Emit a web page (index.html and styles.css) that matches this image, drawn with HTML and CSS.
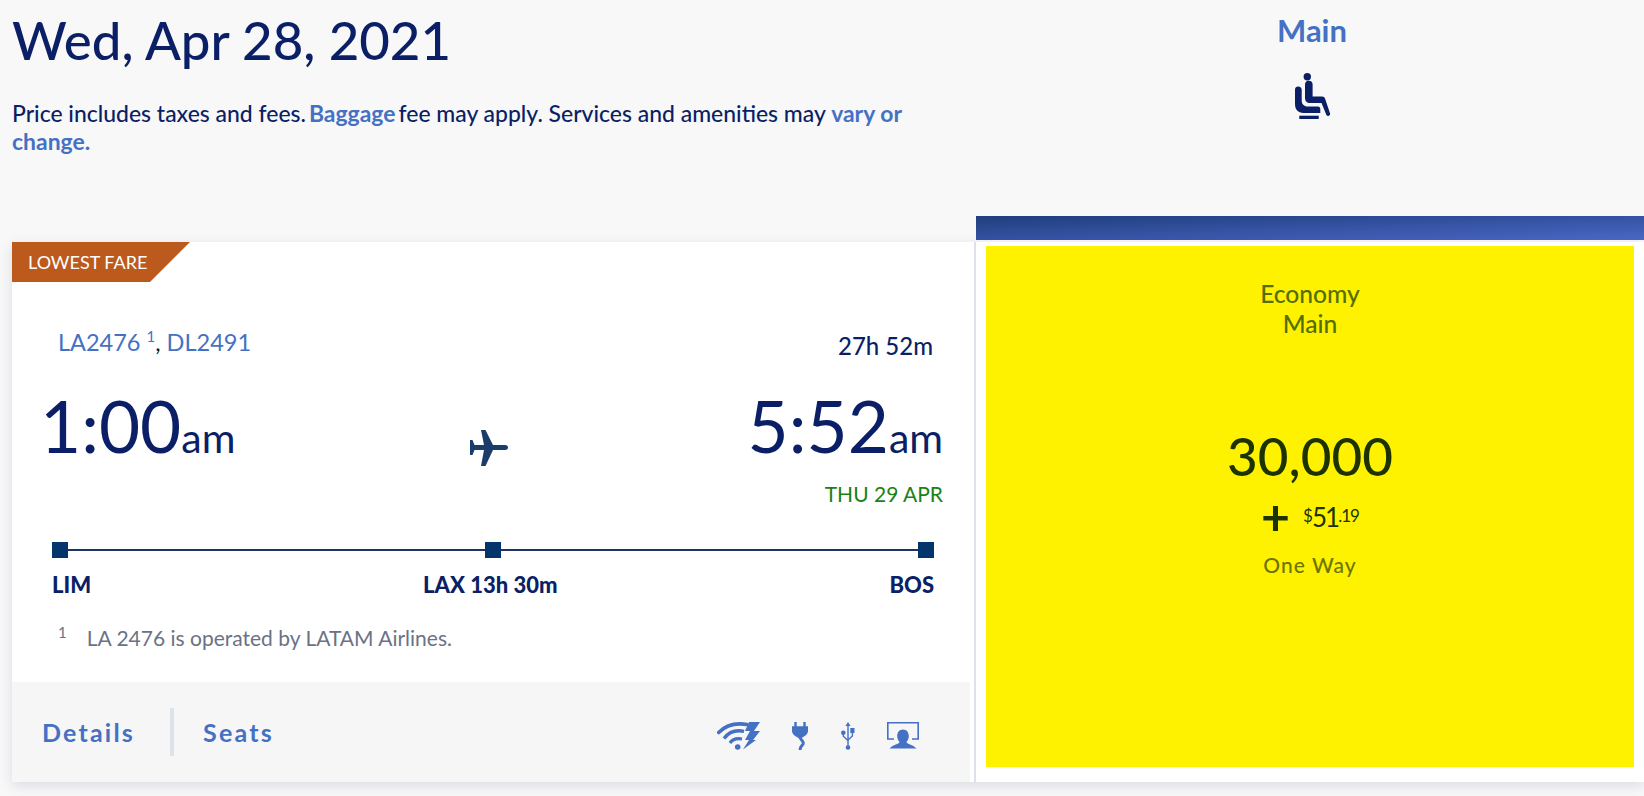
FILE: index.html
```html
<!DOCTYPE html>
<html lang="en">
<head>
<meta charset="utf-8">
<title>Flight results</title>
<link rel="stylesheet" href="styles.css">
</head>
<body>
<div class="page">
  <header class="top">
    <div class="intro">
      <h1 class="date">Wed, Apr 28, 2021</h1>
      <p class="note"><span>Price includes taxes and fees.</span><a class="link tight">Baggage</a><span>fee may apply. Services and amenities may </span><a class="link">vary or</a><br><a class="link">change.</a></p>
    </div>
    <div class="cabin">
      <div class="cabin-name">Main</div>
      <svg class="seat" viewBox="0 0 36 46" aria-hidden="true">
        <circle cx="13.300" cy="3.700" r="3.700" fill="#0b1f66"/>
        <path d="M11 11.500a3.800 3.800 0 0 1 7.600 0V23.500h9.500c1.500 0 2.500.8 3 2.200l5 14.800a2 2 0 0 1-3.700 1.400L27.500 30H16c-3 0-5-2-5-5z" fill="#0b1f66"/>
        <path d="M1 16.500c0-2 1.300-3 3.200-3s3.300 1 3.500 3v11c0 3.500 2.300 6 6 6H24c1.500 0 2.300 1 2.300 2.500v4H9.500C4 40 1 36.500 1 31z" fill="#0b1f66"/>
        <rect x="5.300" y="42.700" width="19.400" height="3.300" fill="#0b1f66"/>
      </svg>
    </div>
  </header>
  <div class="band-row"><div class="band"></div></div>
  <main class="result">
    <section class="card">
      <div class="badge">LOWEST FARE</div>
      <div class="flight">
        <div class="meta">
          <div class="numbers"><a class="flight-no">LA2476 <sup class="ref">1</sup></a>, <a class="flight-no">DL2491</a></div>
          <div class="duration">27h 52m</div>
        </div>
        <div class="times">
          <div class="time">1:00<span class="ampm">am</span></div>
          <svg class="plane" viewBox="0 0 38 36" aria-hidden="true">
            <path d="M0 10h2.500l2 5H14L11 0h4.500L23 15h12c2 0 3 1 3 2.500s-1 2.500-3 2.500H23l-7.500 16H11l3-16H4.500l-2 5H0z" fill="#1c3c6c"/>
          </svg>
          <div class="time">5:52<span class="ampm">am</span></div>
        </div>
        <div class="arrival-date">THU 29 APR</div>
        <div class="route">
          <span class="stop"></span><span class="leg"></span><span class="stop"></span><span class="leg"></span><span class="stop"></span>
        </div>
        <div class="airports">
          <span>LIM</span>
          <span>LAX 13h 30m</span>
          <span>BOS</span>
        </div>
        <div class="operated"><sup class="op-ref">1</sup><span>LA 2476 is operated by LATAM Airlines.</span></div>
      </div>
      <div class="actions">
        <a class="action">Details</a>
        <span class="sep"></span>
        <a class="action">Seats</a>
        <div class="amenities">
          <svg class="am am-wifi" viewBox="0 0 43 28" aria-hidden="true">
            <path d="M1.700 10.500C8 4 18 .5 30 2.500" fill="none" stroke="#4471c4" stroke-width="3.600" stroke-linecap="round"/>
            <path d="M7 16.500C11 11 18 7.500 27 9.300" fill="none" stroke="#4471c4" stroke-width="3.400"/>
            <path d="M13 21c2-3 6-5 12-4" fill="none" stroke="#4471c4" stroke-width="3.200"/>
            <circle cx="20.700" cy="25" r="2.800" fill="#4471c4"/>
            <path d="M32 0h11l-6 9h6l-7 9h3L26 27.500 32 18h-4l5-9h-5z" fill="#4471c4"/>
          </svg>
          <svg class="am am-plug" viewBox="0 0 16 28" aria-hidden="true">
            <path d="M2.300 0h2.400v4.300h6.600V0h2.400v4.300H16V9c0 3-3 5-6.500 7h-3C3 14 0 12 0 9V4.300h2.300z" fill="#4471c4"/>
            <path d="M8 15c0 3 3.300 3.500 3.300 6S8 24 8 28" fill="none" stroke="#4471c4" stroke-width="3"/>
          </svg>
          <svg class="am am-usb" viewBox="0 0 14 28" aria-hidden="true">
            <path d="M7 0l2.600 4H7.700v21H6.300V4H4.400z" fill="#4471c4"/>
            <circle cx="7" cy="25.500" r="2.300" fill="#4471c4"/>
            <circle cx="2.300" cy="10.700" r="2.300" fill="#4471c4"/>
            <rect x="9.300" y="6" width="4.200" height="5" fill="#4471c4"/>
            <path d="M2.300 12v2.300L7 18.500M11.400 10v4L7 18" fill="none" stroke="#4471c4" stroke-width="1.400"/>
          </svg>
          <svg class="am am-screen" viewBox="0 0 32 28" aria-hidden="true">
            <path d="M7 17H.800V.800h30.400V17H25" fill="none" stroke="#4471c4" stroke-width="1.600"/>
            <path d="M16 7.500c3.500 0 5.800 2.800 5.800 6.500 0 2.500-1 4.500-2.300 6 0 2 6.500 2.500 10 6.500H2.500c3.500-4 10-4.500 10-6.500-1.300-1.500-2.300-3.500-2.300-6 0-3.700 2.300-6.500 5.800-6.500z" fill="#4471c4"/>
          </svg>
        </div>
      </div>
    </section>
    <section class="fare">
      <div class="fare-box">
        <div class="fare-name">Economy<br>Main</div>
        <div class="miles">30,000</div>
        <div class="cash"><span class="plus">+</span><span class="price"><span class="cur">$</span>51<span class="cents">.19</span></span></div>
        <div class="oneway">One Way</div>
      </div>
    </section>
  </main>
</div>
</body>
</html>
```

FILE: styles.css
```css
* { box-sizing: border-box; }
html, body { margin: 0; height: 100%; }
body { background: #f8f8f8; font-family: Lato, "Open Sans", sans-serif; color: #0b1f66; overflow: hidden; }
.page { width: 1644px; height: 796px; padding-left: 12px; }
a { text-decoration: none; }

.top { display: flex; height: 216px; }
.intro { width: 964px; }
.date { margin: 0; padding-top: 5px; font-size: 52.750px; line-height: 70px; font-weight: 500; }
.note { margin: 24px 0 0; width: 920px; font-size: 22.950px; line-height: 28px; font-weight: 500; }
.link { color: #4471c4; font-weight: 700; }
.tight { margin: 0 3px; }
.cabin { flex: 1; display: flex; flex-direction: column; align-items: center; padding-left: 4px; }
.cabin-name { margin-top: 12px; font-size: 31px; line-height: 36px; font-weight: 700; color: #4471c4; }
.seat { width: 36px; height: 46px; margin-top: 25px; }

.band-row { padding-left: 964px; height: 26px; }
.band { height: 24px; background: linear-gradient(178deg, #1f3e7c 0%, #3552a3 50%, #4b68c6 100%); }

.result { display: flex; height: 540px; box-shadow: 0 4px 12px rgba(40, 60, 110, .14); }
.card { width: 964px; background: #fff; display: flex; flex-direction: column; position: relative; border-right: 2px solid #dde1ec; padding-right: 4px; }
.badge { position: absolute; left: 0; top: 0; width: 178px; height: 40px; padding-left: 16px; background: #bc5a1e; color: #fff; font-size: 18px; line-height: 41px; clip-path: polygon(0 0, 100% 0, 138px 100%, 0 100%); }
.flight { flex: 1; padding: 84px 36px 0 40px; }
.meta { display: flex; justify-content: space-between; align-items: flex-start; padding: 0 1px 0 6px; }
.numbers { font-size: 23.500px; line-height: 32px; color: #111; }
.flight-no { color: #4471c4; }
.ref { font-size: 15px; line-height: 0; vertical-align: 9px; }
.duration { font-size: 24px; line-height: 32px; padding-top: 4px; font-weight: 500; }
.times { display: flex; justify-content: space-between; align-items: flex-start; margin: 22px -9px 0 -12px; }
.time { font-size: 71px; line-height: 84px; }
.ampm { font-size: 41px; }
.plane { width: 38px; height: 36px; margin-top: 46px; margin-right: 6px; filter: blur(.5px); }
.arrival-date { text-align: right; margin: 1px -9px 0 0; font-size: 21px; line-height: 26px; color: #198214; }
.route { display: flex; align-items: center; margin-top: 35px; }
.stop { width: 16px; height: 16px; background: #04346c; flex: none; }
.leg { flex: 1; height: 2px; background: #1c3461; }
.airports { display: flex; justify-content: space-between; margin-top: 12px; font-size: 22px; line-height: 30px; font-weight: 900; }
.operated { display: flex; margin: 25px 0 0 6px; color: #6a7285; font-size: 21px; line-height: 26px; }
.op-ref { font-size: 15px; line-height: 1; margin: 0 20px 0 0; vertical-align: baseline; }
.actions { height: 100px; background: #f6f6f7; display: flex; align-items: center; padding: 0 51px 0 30px; }
.action { font-size: 25px; font-weight: 700; letter-spacing: 2.200px; color: #4471c4; }
.sep { width: 4px; height: 48px; background: #dde3ec; margin: 0 29px 0 35px; }
.amenities { margin: 8px 0 0 auto; display: flex; align-items: center; gap: 32.500px; }
.am { display: block; height: 28px; }
.am-wifi { width: 43px; }
.am-plug { width: 16px; }
.am-usb { width: 14px; }
.am-screen { width: 32px; }

.fare { flex: 1; background: #fff; padding: 4px 10px 15px 10px; }
.fare-box { height: 100%; background: #fff200; display: flex; flex-direction: column; align-items: center; color: #1c3300; }
.fare-name { margin-top: 33px; font-size: 24.600px; line-height: 30px; text-align: center; color: #546e00; font-weight: 500; }
.miles { margin-top: 86px; font-size: 53px; line-height: 62px; font-weight: 500; }
.cash { display: flex; align-items: center; gap: 13px; margin-top: 9px; }
.plus { font-size: 50px; line-height: 40px; font-weight: 700; }
.price { font-size: 26px; line-height: 34px; letter-spacing: -2px; }
.cur, .cents { font-size: 17px; letter-spacing: -1px; vertical-align: 5px; }
.oneway { margin-top: 16px; font-size: 21px; letter-spacing: 1px; color: #6b7500; font-weight: 500; }
```
